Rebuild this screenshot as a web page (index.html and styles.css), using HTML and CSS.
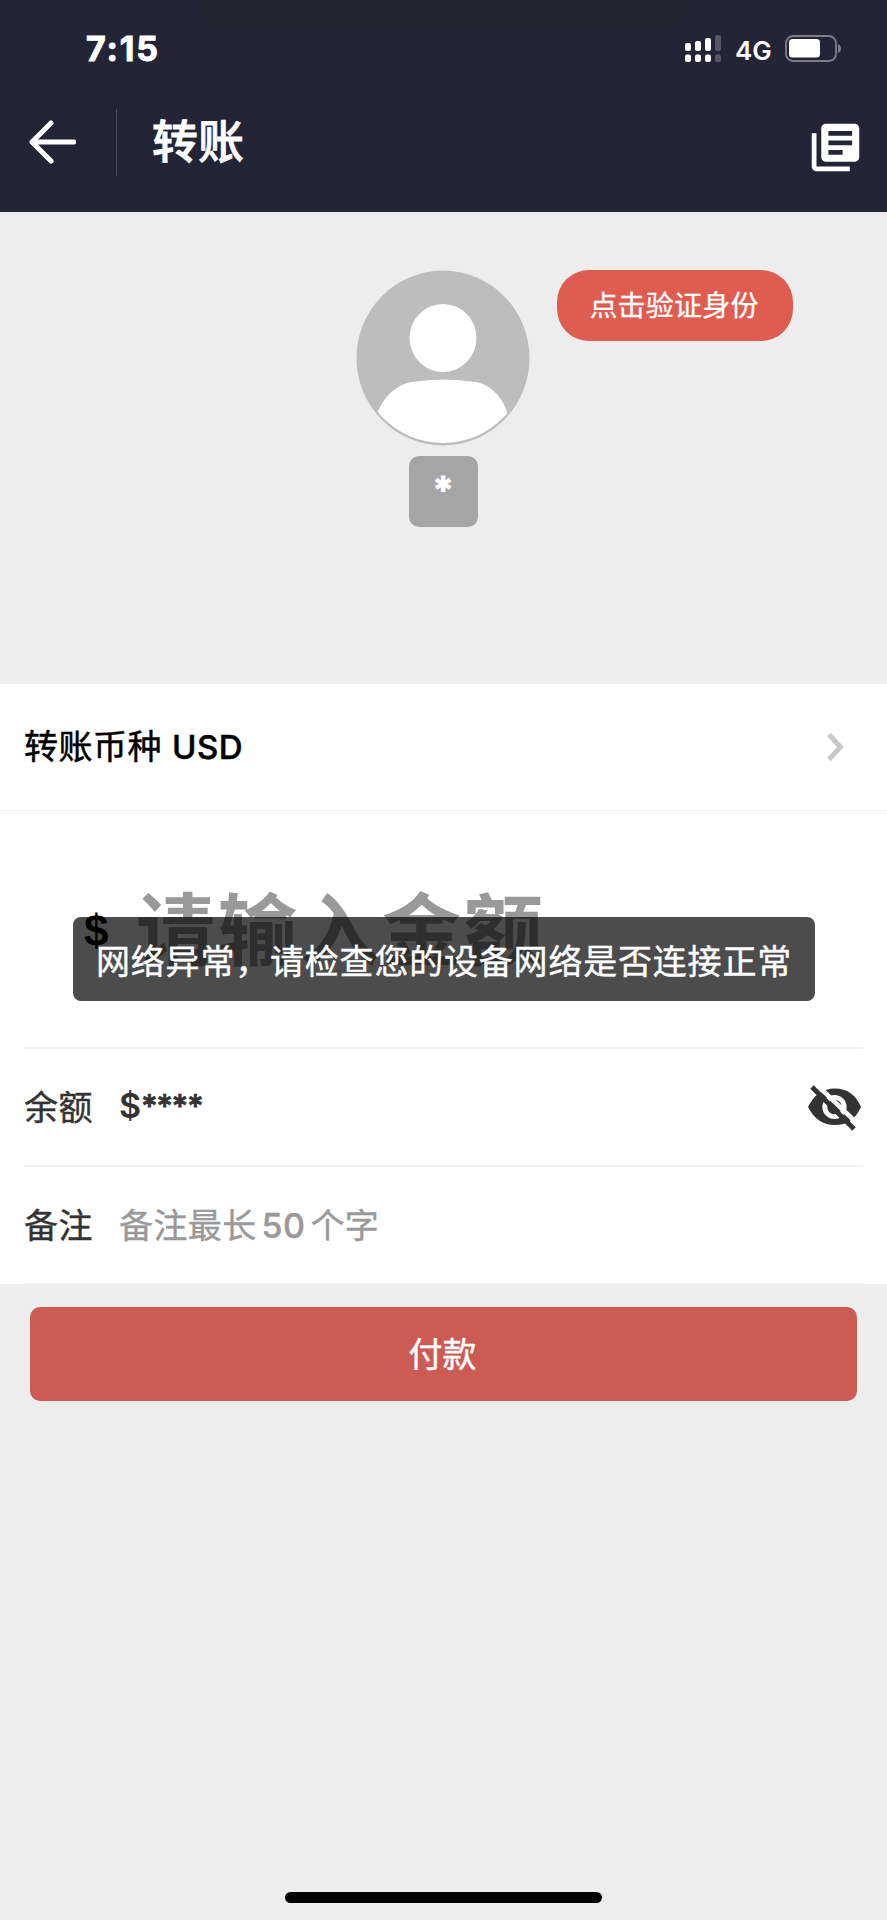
FILE: index.html
```html
<!DOCTYPE html>
<html lang="zh-CN">
<head>
<meta charset="utf-8">
<title>转账</title>
<link rel="stylesheet" href="styles.css">
</head>
<body>
<div class="screen">
  <header class="header">
    <div class="notch"></div>
    <div class="status">
      <span class="time">7:15</span>
      <div class="indicators">
        <svg class="signal" width="36" height="27" viewBox="0 0 36 27">
          <g fill="#fff"><rect x="0" y="8" width="6" height="8" rx="2"/><rect x="10" y="6" width="6" height="10" rx="2"/><rect x="20" y="3" width="6" height="13" rx="2"/><rect x="0" y="19.500" width="6" height="7.500" rx="2"/><rect x="10" y="19.500" width="6" height="7.500" rx="2"/><rect x="20" y="19.500" width="6" height="7.500" rx="2"/></g>
          <g fill="#555766"><rect x="30" y="0" width="6" height="16" rx="2"/><rect x="30" y="19.500" width="6" height="7.500" rx="2"/></g>
        </svg>
        <span class="network">4G</span>
        <svg class="battery" width="57" height="27" viewBox="0 0 57 27">
          <rect x="1" y="1" width="50" height="25" rx="7" fill="none" stroke="#7c7d89" stroke-width="1.900"/>
          <rect x="4" y="4" width="31" height="18.500" rx="3.500" fill="#fff"/>
          <path d="M53 9q3 1 3 4.500t-3 4.500z" fill="#7c7d89"/>
        </svg>
      </div>
    </div>
    <nav class="nav">
      <svg class="back" width="48" height="44" viewBox="0 0 48 44"><path d="M23 3L4 22l19 19M4 22h42" fill="none" stroke="#fff" stroke-width="5" stroke-linecap="round" stroke-linejoin="round"/></svg>
      <span class="separator"></span>
      <h1 class="title">转账</h1>
      <svg class="records" width="57" height="57" viewBox="0 0 24 24"><path fill="#fff" d="M4 6H2v14c0 1.100.9 2 2 2h14v-2H4V6zm16-4H8c-1.100 0-2 .9-2 2v12c0 1.100.9 2 2 2h12c1.100 0 2-.9 2-2V4c0-1.100-.9-2-2-2zm-1 9H9V9h10v2zm-4 4H9v-2h6v2zm4-8H9V5h10v2z"/></svg>
    </nav>
  </header>

  <section class="payee">
    <div class="person">
      <svg class="avatar" width="174" height="176" viewBox="0 0 174 176">
        <clipPath id="disc"><ellipse cx="87" cy="87" rx="85" ry="86"/></clipPath>
        <ellipse cx="87" cy="88" rx="86.500" ry="87.500" fill="#bdbdbd"/>
        <ellipse cx="87" cy="68" rx="33.500" ry="34" fill="#fff"/>
        <path clip-path="url(#disc)" fill="#fff" d="M20 148C25 128 41 114 56 112Q87 107 119 112C134 114 148 127 153 148V176H20z"/>
      </svg>
      <div class="name">*</div>
    </div>
    <button class="verify">点击验证身份</button>
  </section>

  <main class="form">
    <div class="currency">
      <span>转账币种 <span class="code">USD</span></span>
      <svg width="16" height="28" viewBox="0 0 16 28"><path d="M2 1.500L13.500 14 2 26.500" fill="none" stroke="#c8c8c8" stroke-width="5"/></svg>
    </div>
    <div class="amount">
      <span class="symbol">$</span>
      <span class="amount-hint">请输入金额</span>
      <div class="toast">网络异常，请检查您的设备网络是否连接正常</div>
    </div>
    <div class="row">
      <span class="label">余额</span>
      <span class="balance">$<span class="mask">****</span></span>
      <svg class="eye" width="54" height="46" viewBox="0 0 54 46">
        <path fill="#333" d="M0 22Q9 3.500 27 3.500T53 22Q45 40 27 40T0 22z"/>
        <circle cx="26.500" cy="22" r="9.700" fill="#333" stroke="#fff" stroke-width="4.800"/>
        <path d="M9 0L52 41" stroke="#fff" stroke-width="4.500"/>
        <path d="M4 2L46 44" stroke="#333" stroke-width="4.800"/>
      </svg>
    </div>
    <div class="row">
      <span class="label">备注</span>
      <span class="hint">备注最长<span class="count">50</span>个字</span>
    </div>
  </main>
  <button class="pay">付款</button>
  <div class="home"></div>
</div>
</body>
</html>
```

FILE: styles.css
```css
* { box-sizing: border-box; }
body {
  margin: 0;
  background: #ededed;
  font-family: Inter, "Noto Sans CJK SC", sans-serif;
}
button { border: 0; padding: 0; font-family: inherit; }
svg { display: block; flex: none; }
.screen { width: 887px; height: 1920px; display: flex; flex-direction: column; overflow: hidden; }

.header { position: relative; height: 212px; background: #232536; color: #fff; flex: none; }
.notch {
  position: absolute; left: 196px; top: 0; width: 495px; height: 28px;
  background: #242530; border-radius: 0 0 40px 40px;
}
.status { height: 97px; padding: 0 45px 0 86px; display: flex; justify-content: space-between; align-items: center; position: relative; }
.time { font-size: 34px; font-weight: 700; line-height: 40px; letter-spacing: 1.9px; -webkit-text-stroke: .9px #fff; }
.indicators { display: flex; align-items: center; }
.network { width: 36px; margin: 4px 14px 0 14px; font-size: 26px; line-height: 30px; font-weight: 600; white-space: nowrap; }
.nav { height: 90px; display: flex; align-items: center; padding: 0 23px 0 28px; }
.separator { width: 1px; height: 67px; margin: 0 35px 0 40px; background: #4c4d5c; }
.title { margin: -2px 0 0; font-size: 46px; line-height: 60px; font-weight: 500; -webkit-text-stroke: .8px #fff; }
.records { margin: 10px 0 0 auto; }

.payee { height: 472px; flex: none; padding: 58px 94px 0 356px; display: flex; justify-content: space-between; align-items: flex-start; }
.person { display: flex; flex-direction: column; align-items: center; gap: 10px; }
.name { width: 69px; height: 71px; border-radius: 10px; background: #a5a5a5; color: #fff; font-size: 38px; font-weight: 700; line-height: 68px; text-align: center; -webkit-text-stroke: .8px #fff; }
.verify { width: 236px; height: 71px; padding: 0 2px 3px 0; border-radius: 32px; background: #df5d50; color: #fff; font-size: 28px; letter-spacing: .2px; -webkit-text-stroke: .3px #fff; }

.form { height: 600px; flex: none; background: #fff; color: #333; font-size: 34px; letter-spacing: .5px; }
.currency { height: 127px; padding: 0 44px 0 24px; border-bottom: 1px solid #eee; display: flex; justify-content: space-between; align-items: center; color: #000; -webkit-text-stroke: .5px #000; }
.currency > span { padding-bottom: 5px; }
.code { font-size: 33px; font-weight: 500; -webkit-text-stroke: .5px #000; }
.amount { position: relative; height: 238px; margin: 0 24px; border-bottom: 2px solid #f2f2f2; display: flex; align-items: center; padding-left: 60px; }
.symbol { width: 52px; padding-top: 3px; font: 700 44px "Liberation Sans", sans-serif; color: #000; }
.amount-hint { padding-top: 4px; font-size: 79px; line-height: 100px; letter-spacing: 3px; font-weight: 700; color: #999; white-space: nowrap; }
.toast {
  position: absolute; left: 49px; top: 106px; width: 742px; height: 84px; border-radius: 8px;
  background: rgba(0, 0, 0, .7); color: #fff; text-align: center; line-height: 89px;
  font-size: 34px; letter-spacing: .8px; white-space: nowrap; -webkit-text-stroke: .4px #fff;
}
.row { height: 118px; margin: 0 24px; border-bottom: 2px solid #f2f2f2; display: flex; align-items: center; }
.label { width: 95px; padding-bottom: 4px; -webkit-text-stroke: .4px #333; }
.balance { padding-bottom: 4px; font-weight: 600; letter-spacing: -.5px; }
.mask { font-size: 32px; letter-spacing: -1.900px; -webkit-text-stroke: .6px #333; }
.eye { margin: 2px 1px 0 auto; }
.hint { padding-bottom: 4px; letter-spacing: .4px; color: #999; -webkit-text-stroke: .4px #999; }
.count { margin: 0 5px; font-weight: 500; }

.pay { width: 827px; height: 94px; margin: 23px 0 0 30px; padding: 0 2px 4px 0; flex: none; border-radius: 10px; background: #cb5b53; color: #fff; font-size: 34px; -webkit-text-stroke: .4px #fff; }
.home { width: 317px; height: 11px; margin: auto auto 17px; border-radius: 6px; background: #000; flex: none; }
```
